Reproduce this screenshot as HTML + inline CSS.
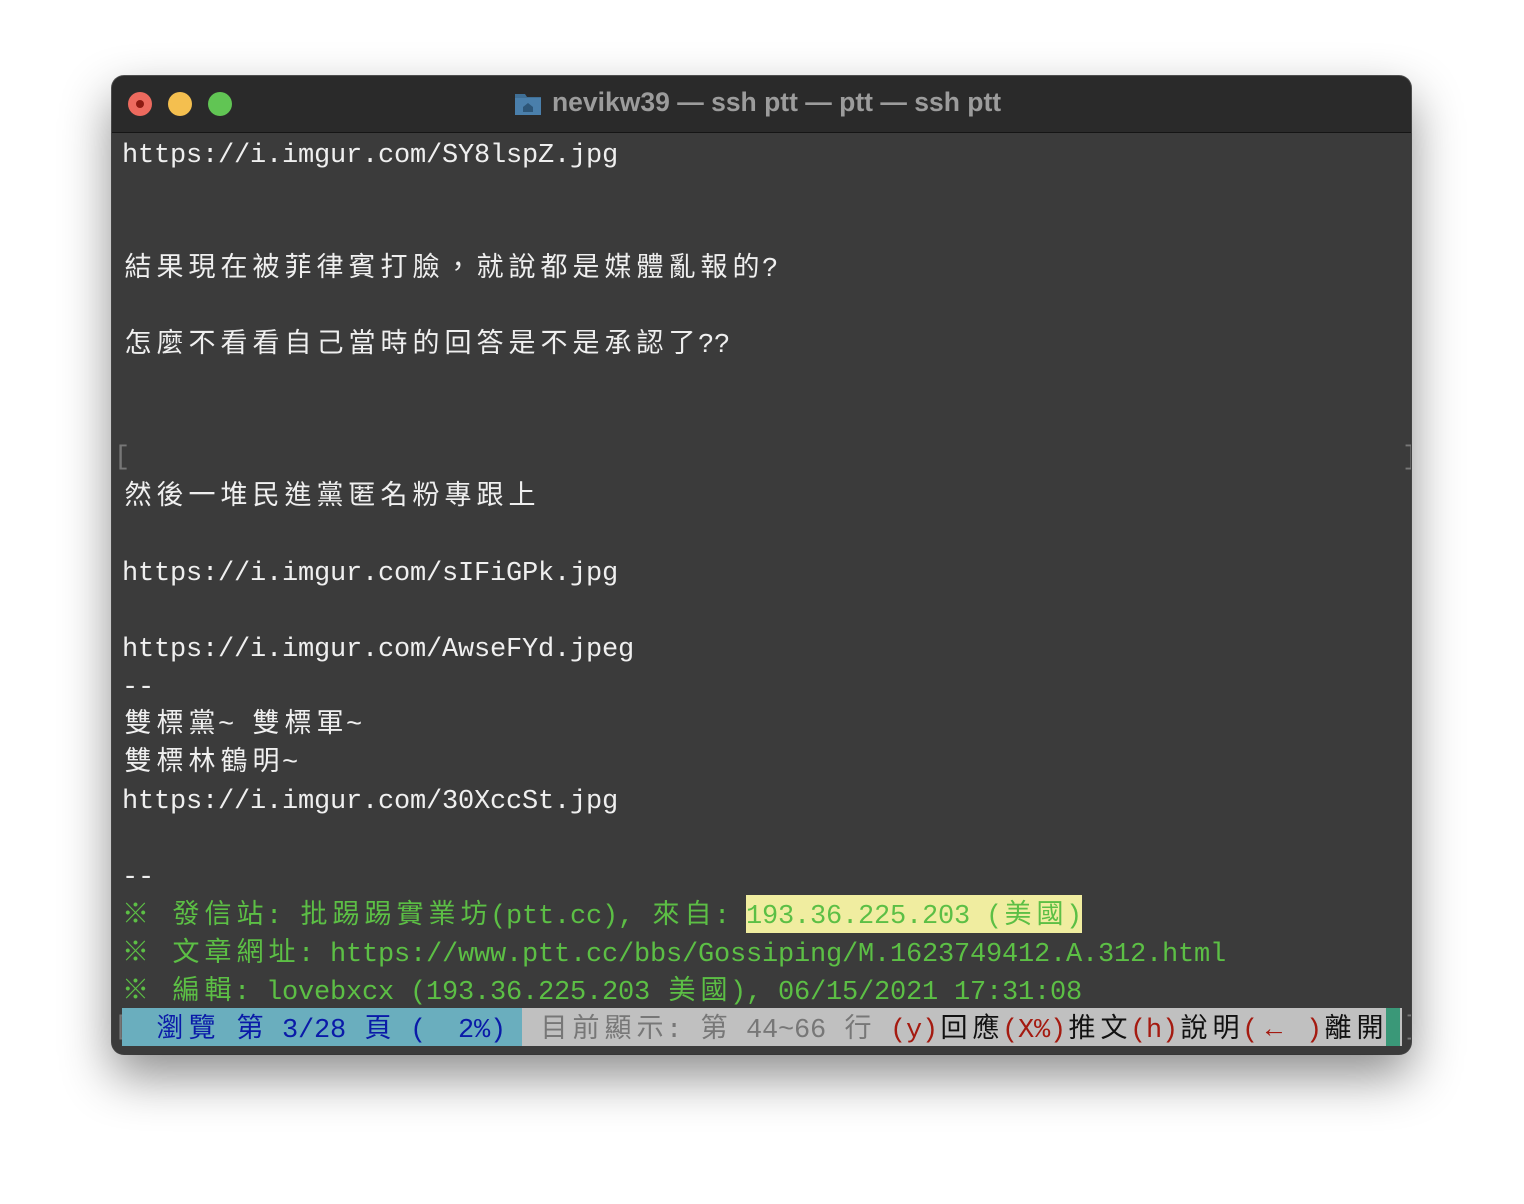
<!DOCTYPE html>
<html><head><meta charset="utf-8">
<style>
html,body{margin:0;padding:0;background:#fff;width:1524px;height:1204px;overflow:hidden}
.win{position:absolute;left:112px;top:76px;width:1299px;height:978px;border-radius:12px;background:#3b3b3b;overflow:hidden;box-shadow:0 22px 50px rgba(0,0,0,.45),0 0 0 1px #555;}
.tb{position:absolute;left:0;top:0;width:100%;height:56px;background:#2a2a2a;border-bottom:1px solid #151515}
.dot{position:absolute;top:16px;width:24px;height:24px;border-radius:50%}
.title{position:absolute;left:440px;top:11px;font:bold 26.5px "Liberation Sans",sans-serif;color:#9c9c9c;white-space:nowrap}
.t{position:absolute;left:10px;height:38px;line-height:38px;font-family:"Liberation Mono","Noto Sans CJK TC",monospace;font-size:27px;color:#efefef;white-space:pre}
.t span.c{display:inline-block;text-align:center;overflow:visible;height:38px;vertical-align:top}
.g{color:#5cbf45}
.g span.c{position:relative;top:3px}
.hl{background:#f0eda0;display:inline-block;height:38px;vertical-align:top}
.sb1,.sb2{display:inline-block;height:38px;vertical-align:top}
.sb1 span.c,.sb2 span.c{position:relative;top:4px}
.sb1{background:#6aaebe;color:#0a1aa8}
.sb2{background:#c0c0c0;color:#777}
.r{color:#a41a10}
.k{color:#111}
</style></head><body>
<div class="win">
 <div class="tb">
  <div class="dot" style="left:16px;background:#ed6a5e"><div style="position:absolute;left:8px;top:8px;width:8px;height:8px;border-radius:50%;background:#8e1b12"></div></div>
  <div class="dot" style="left:56px;background:#f4bf4f"></div>
  <div class="dot" style="left:96px;background:#61c554"></div>
  <svg style="position:absolute;left:402px;top:14px" width="28" height="26" viewBox="0 0 28 26"><path d="M1 4h10l2 3h14v18H1z" fill="#3f6f96"/><path d="M1 8h26v17H1z" fill="#4a7fab"/><path d="M9 17l5-4 5 4v5h-10z" fill="#2d5678"/></svg>
  <div class="title">nevikw39 — ssh ptt — ptt — ssh ptt</div>
 </div>
 <div class="t" style="top:61px">https://i.imgur.com/SY8lspZ.jpg</div>
 <div class="t" style="top:175px">結果現在被菲律賓打臉，就說都是媒體亂報的?</div>
 <div class="t" style="top:251px">怎麼不看看自己當時的回答是不是承認了??</div>
 <div class="t" style="top:363px;left:2px;color:#777">[</div>
 <div class="t" style="top:363px;left:1290px;color:#777">]</div>
 <div class="t" style="top:403px">然後一堆民進黨匿名粉專跟上</div>
 <div class="t" style="top:479px">https://i.imgur.com/sIFiGPk.jpg</div>
 <div class="t" style="top:555px">https://i.imgur.com/AwseFYd.jpeg</div>
 <div class="t" style="top:593px">--</div>
 <div class="t" style="top:631px">雙標黨~ 雙標軍~</div>
 <div class="t" style="top:669px">雙標林鶴明~</div>
 <div class="t" style="top:707px">https://i.imgur.com/30XccSt.jpg</div>
 <div class="t" style="top:783px">--</div>
 <div class="t g" style="top:819px">※ 發信站: 批踢踢實業坊(ptt.cc), 來自: <span class="hl">193.36.225.203 (美國)</span></div>
 <div class="t g" style="top:857px">※ 文章網址: https://www.ptt.cc/bbs/Gossiping/M.1623749412.A.312.html</div>
 <div class="t g" style="top:895px">※ 編輯: lovebxcx (193.36.225.203 美國), 06/15/2021 17:31:08</div>
 <div class="t" style="top:933px;left:2px;color:#777">[</div>
 <div class="t" style="top:932px;left:10px"><span class="sb1">  瀏覽 第 3/28 頁 (  2%) </span><span class="sb2"> 目前顯示: 第 44~66 行 </span><span class="sb2"><span class="r">(y)</span><span class="k">回應</span><span class="r">(X%)</span><span class="k">推文</span><span class="r">(h)</span><span class="k">說明</span><span class="r">(← )</span><span class="k">離開 </span></span></div>
 <div style="position:absolute;left:1274px;top:932px;width:14px;height:38px;background:#3a9878"></div>
 <div class="t" style="top:933px;left:1292px;color:#777">]</div>
</div>
<script>
function wide(ch){var c=ch.codePointAt(0);return (c>=0x2E80&&c<=0x9FFF)||(c>=0xFF00&&c<=0xFF60)||(c>=0x3000&&c<=0x303F)||c===0x203B||c===0x2190;}
document.querySelectorAll('.t').forEach(function(el){
 var walker=document.createTreeWalker(el,NodeFilter.SHOW_TEXT),nodes=[],n;
 while(n=walker.nextNode())nodes.push(n);
 nodes.forEach(function(tn){
  var f=document.createDocumentFragment();
  Array.from(tn.nodeValue).forEach(function(ch){
   var s=document.createElement('span');s.className='c';
   s.style.width=(wide(ch)?32:16)+'px';
   if(ch==='\u203B'){s.style.textAlign='left';}
   s.textContent=ch===' '?'\u00a0':ch;f.appendChild(s);
  });
  tn.parentNode.replaceChild(f,tn);
 });
});
</script>
</body></html>
